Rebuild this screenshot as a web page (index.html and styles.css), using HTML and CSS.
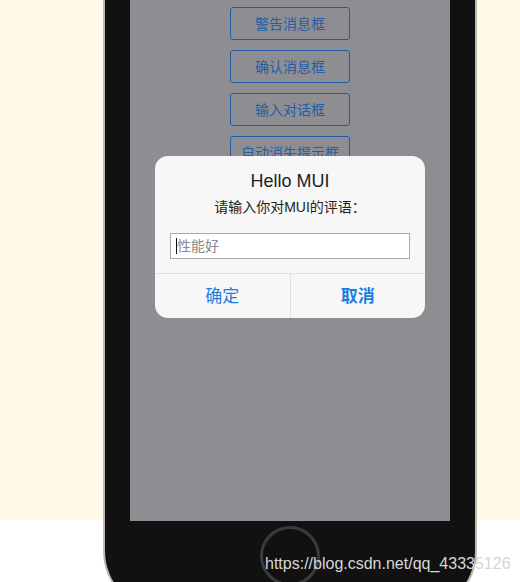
FILE: index.html
```html
<!DOCTYPE html>
<html lang="zh-CN">
<head>
<meta charset="utf-8">
<title>MUI 对话框</title>
<link rel="stylesheet" href="styles.css">
</head>
<body>
<div class="stage">
  <div class="phone">
    <div class="screen">
      <div class="btn-list">
        <button class="btn">警告消息框</button>
        <button class="btn">确认消息框</button>
        <button class="btn">输入对话框</button>
        <button class="btn">自动消失提示框</button>
      </div>
      <div class="popup">
        <div class="popup-inner">
          <div class="popup-title">Hello MUI</div>
          <div class="popup-text">请输入你对MUI的评语：</div>
          <div class="popup-input"><span class="caret"></span><span class="placeholder">性能好</span></div>
        </div>
        <div class="popup-buttons">
          <span class="popup-button">确定</span>
          <span class="popup-button popup-button-bold">取消</span>
        </div>
      </div>
    </div>
    <div class="home"></div>
  </div>
  <div class="watermark">https://blog.csdn.net/qq_43335126</div>
</div>
</body>
</html>
```

FILE: styles.css
```css
* { box-sizing: border-box; }

html, body {
  margin: 0;
  padding: 0;
}

body {
  font-family: "Liberation Sans", "Noto Sans CJK SC", sans-serif;
  background: #ffffff;
}

.stage {
  position: relative;
  height: 582px;
  overflow: hidden;
  background: linear-gradient(to bottom, #fffae9 0, #fffae9 520px, #ffffff 520px);
}

.phone {
  margin-left: 103px;
  width: 374px;
  height: 613px;
  padding: 0 25px;
  background: #111111;
  border: 2px solid #bdb9ae;
  border-top: 0;
  border-radius: 0 0 62px 62px;
  display: flex;
  flex-direction: column;
  align-items: center;
}

.screen {
  position: relative;
  width: 320px;
  height: 521px;
  background: #8e8d92;
  flex: none;
}

.btn-list {
  display: flex;
  flex-direction: column;
  align-items: center;
  gap: 10px;
  padding-top: 7px;
}

.btn {
  width: 120px;
  height: 33px;
  border: 1px solid #1f5da6;
  border-radius: 3px;
  background: transparent;
  color: #215fa8;
  font-family: "Liberation Sans", "Noto Sans CJK SC", sans-serif;
  font-size: 14px;
  line-height: 20px;
  padding: 0;
}

.popup {
  position: absolute;
  left: 25px;
  top: 156px;
  width: 270px;
  border-radius: 13px;
  overflow: hidden;
  background: rgba(249, 249, 249, 0.98);
}

.popup-inner {
  padding: 15px 15px 14px;
  text-align: center;
}

.popup-title {
  font-size: 18px;
  line-height: 21px;
  color: #222222;
}

.popup-text {
  margin-top: 5px;
  font-size: 14px;
  line-height: 20px;
  color: #222222;
}

.popup-input {
  margin-top: 16px;
  width: 240px;
  height: 26px;
  border: 1px solid #a9a9a9;
  background: #ffffff;
  display: flex;
  align-items: center;
  padding-left: 5px;
  text-align: left;
}

.caret {
  width: 1px;
  height: 16px;
  background: #111111;
  flex: none;
}

.placeholder {
  font-size: 14px;
  line-height: 20px;
  color: #8a8a8a;
}

.popup-buttons {
  display: flex;
  height: 45px;
  border-top: 1px solid #e0e0e0;
}

.popup-button {
  flex: 1;
  display: flex;
  align-items: center;
  justify-content: center;
  padding-bottom: 3px;
  font-size: 17px;
  color: #1a7de6;
}

.popup-button + .popup-button {
  border-left: 1px solid #e0e0e0;
}

.popup-button-bold {
  font-weight: bold;
}

.home {
  margin-top: 5px;
  width: 60px;
  height: 60px;
  border: 3px solid #3a3a3a;
  border-radius: 50%;
  flex: none;
}

.watermark {
  position: absolute;
  left: 265px;
  top: 556px;
  font-size: 16px;
  line-height: 16px;
  color: #d6d6d6;
  white-space: nowrap;
}
```
